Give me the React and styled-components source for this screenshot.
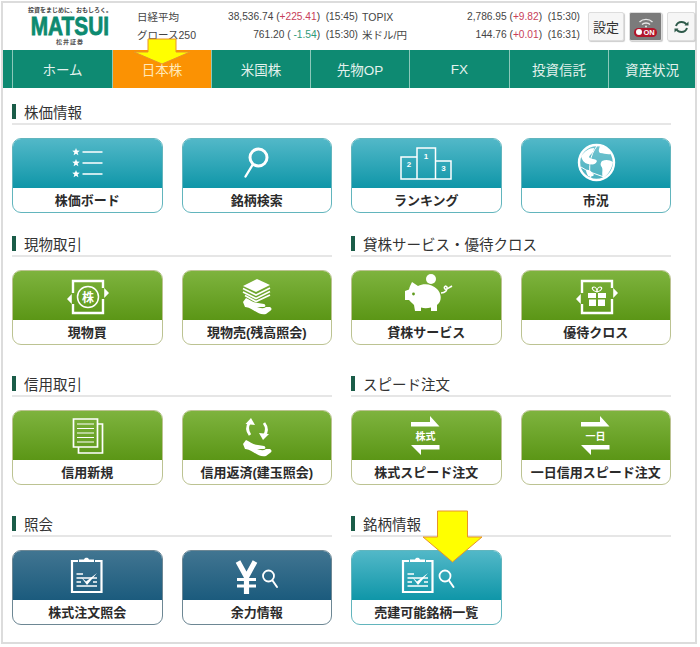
import React from 'react'
import styled, { createGlobalStyle } from 'styled-components'

const Global = createGlobalStyle`
  html, body { margin: 0; padding: 0; background: #fff; }
  body { font-family: "Liberation Sans", "Noto Sans CJK JP", sans-serif; color: #333; }
`

const tones = {
  teal: { top: '#52b8c8', bottom: '#0f96a8', edge: '#62b5bd' },
  green: { top: '#7eb33e', bottom: '#5b9616', edge: '#bcc392' },
  navy: { top: '#417591', bottom: '#1b5b7d', edge: '#6d8794' },
}

const Frame = styled.div`
  position: relative;
  box-sizing: border-box;
  width: 696px;
  height: 643px;
  margin: 1px 0 0 1px;
  border: 2px solid #dcdcdc;
  background: #fff;
`
const Header = styled.header`
  display: flex;
  align-items: flex-start;
  height: 47px;
`
const Logo = styled.div`
  width: 134px;
  flex: none;
  display: flex;
  flex-direction: column;
  align-items: center;
  padding-top: 4px;
`
const Tagline = styled.div`
  font-size: 6px;
  line-height: 7px;
  font-weight: 700;
  color: #444;
  white-space: nowrap;
`
const Wordmark = styled.div`
  font-size: 26px;
  line-height: 22px;
  font-weight: 700;
  color: #0d8a70;
  -webkit-text-stroke: 0.8px #0d8a70;
  transform: scaleX(0.8);
  margin-top: 1px;
`
const LogoSub = styled.div`
  font-size: 6px;
  line-height: 8px;
  font-weight: 700;
  color: #555;
  letter-spacing: 1px;
  margin-top: 1px;
`
const Ticker = styled.div`
  width: 443px;
  flex: none;
  display: grid;
  grid-template-columns: 66px 155px 4px 50px 168px;
  grid-auto-rows: 18px;
  margin-top: 5px;
  font-size: 10.2px;
  line-height: 18px;
  color: #444;
  white-space: nowrap;
`
const TickLabel = styled.span`
  font-size: 10.5px;
`
const TickValue = styled.span`
  text-align: right;
  grid-column: ${p => p.$col};
`
const Up = styled.span`
  color: #c8405a;
`
const Down = styled.span`
  color: #2f9a78;
`
const Tools = styled.div`
  display: flex;
  gap: 5px;
  margin: 9px 0 0 8px;
`
const ToolButton = styled.div`
  box-sizing: border-box;
  width: ${p => p.$w}px;
  height: 29px;
  display: flex;
  flex-direction: column;
  align-items: center;
  justify-content: center;
  border: 1px solid #ddd;
  border-radius: 2px;
  background: ${p => p.$dark ? '#7b7b7b' : '#f6f6f6'};
  font-size: 13px;
  color: #333;
  box-shadow: 1px 1px 1px #ccc;
`
const OnPill = styled.span`
  display: flex;
  align-items: center;
  gap: 1px;
  height: 9px;
  padding: 0 2px;
  border-radius: 5px;
  background: #b3142a;
  color: #fff;
  font-size: 7.5px;
  font-weight: 700;
  line-height: 9px;
`
const OnDot = styled.i`
  width: 6px;
  height: 6px;
  border-radius: 50%;
  background: #fff;
`
const Nav = styled.nav`
  display: grid;
  grid-template-columns: 9px 100px 99px 99px 99px 100px 99px 1fr;
  height: 38px;
  background: #0e8a72;
`
const NavItem = styled.div`
  box-sizing: border-box;
  display: flex;
  align-items: center;
  justify-content: center;
  border-left: 1px solid #8cc8ba;
  background: ${p => p.$active ? '#fb9203' : 'transparent'};
  color: ${p => p.$active ? '#ffe9b8' : '#e4f2ee'};
  font-size: 13.5px;
  &:first-child { border-left: 0; }
`
const Main = styled.main`
  display: grid;
  grid-template-columns: 320px 320px;
  column-gap: 19px;
  row-gap: 29px;
  padding: 14px 0 0 9px;
`
const Section = styled.section`
  grid-column: ${p => p.$wide ? '1 / span 2' : 'auto'};
  margin-bottom: ${p => p.$wide ? '-8px' : '0'};
`
const SectionTitle = styled.h2`
  box-sizing: border-box;
  display: flex;
  align-items: center;
  gap: 8px;
  height: 23px;
  margin: 0 0 13px;
  padding-bottom: 2px;
  border-bottom: 2px solid #e6e6e6;
  font-size: 14.5px;
  font-weight: 400;
  color: #333;
  &::before {
    content: '';
    width: 4px;
    height: 15px;
    background: #1a5c48;
  }
`
const Cards = styled.div`
  display: grid;
  grid-template-columns: repeat(${p => p.$cols}, 150.5px);
  column-gap: 19px;
`
const Card = styled.a`
  display: flex;
  flex-direction: column;
  height: 75px;
  box-sizing: border-box;
  border: 1px solid ${p => tones[p.$tone].edge};
  border-radius: 9px;
  overflow: hidden;
  background: #fff;
  text-decoration: none;
`
const CardTop = styled.div`
  flex: none;
  height: 49px;
  display: flex;
  justify-content: center;
  background: linear-gradient(${p => tones[p.$tone].top}, ${p => tones[p.$tone].bottom});
`
const CardLabel = styled.div`
  flex: 1;
  display: flex;
  align-items: center;
  justify-content: center;
  padding-bottom: 2px;
  font-size: 13px;
  font-weight: 700;
  color: #2b2b2b;
  white-space: nowrap;
`
const Arrow = styled.svg`
  position: absolute;
  left: ${p => p.$x}px;
  top: ${p => p.$y}px;
`

const Icon = ({ children }) => (
  <svg width="64" height="49" viewBox="0 0 64 49" fill="none" stroke="#fff" strokeWidth="1.5">{children}</svg>
)

const star = (x, y) => {
  const pts = []
  for (let i = 0; i < 10; i++) {
    const r = i % 2 ? 1.7 : 4
    const a = -Math.PI / 2 + i * Math.PI / 5
    pts.push(`${(x + r * Math.cos(a)).toFixed(1)},${(y + r * Math.sin(a)).toFixed(1)}`)
  }
  return <polygon key={y} points={pts.join(' ')} fill="#fff" stroke="none" />
}

const StarList = () => (
  <Icon>
    {star(21, 13)}{star(21, 24)}{star(21, 35)}
    <path d="M27.5 13H47.5M27.5 24H47.5M27.5 35H47.5" />
  </Icon>
)
const Search = () => (
  <Icon>
    <circle cx="33.5" cy="18.5" r="8.5" strokeWidth="3" />
    <path d="M27.5 26L20.5 37.5" strokeWidth="2.4" strokeLinecap="round" />
  </Icon>
)
const Podium = () => (
  <Icon>
    <path d="M23 18H7V40H57V22H41.5M23 40V9H41.5V40" />
    <text x="32" y="20" fill="#fff" stroke="none" fontSize="8" fontWeight="700" textAnchor="middle">1</text>
    <text x="15" y="28" fill="#fff" stroke="none" fontSize="8" fontWeight="700" textAnchor="middle">2</text>
    <text x="49.5" y="32" fill="#fff" stroke="none" fontSize="8" fontWeight="700" textAnchor="middle">3</text>
  </Icon>
)
const Globe = () => (
  <Icon>
    <circle cx="32.5" cy="23.5" r="17.5" fill="rgba(255,255,255,.22)" strokeWidth="2.4" />
    <path d="M17 17C21 12 25 9 30 9C30 14 26 15 25 18C27 21 31 19 33 22C31 27 27 25 24 25C20 24 18 21 17 17ZM36 7C41 8 45 11 47 15C43 16 40 14 36 14C34 12 35 10 36 7ZM38 22C42 20 46 21 49 23C48 30 44 36 39 39C37 34 40 30 37 27C36 25 37 23 38 22ZM22 31C25 30 28 33 30 36C28 38 26 38 24 37C23 35 22 33 22 31Z" fill="#fff" stroke="none" />
    <path d="M17 28C24 33 32 35 40 38M33 7C26 16 24 28 27 40" strokeWidth="1" />
  </Icon>
)
const Cycle = ({ children }) => (
  <Icon>
    <path d="M18 22V10H48V17M48 28V42H18V33" strokeWidth="2.4" />
    <path d="M49.2 17L54 22L49.2 27ZM16.8 23L12 28L16.8 33Z" fill="#fff" stroke="none" />
    {children}
  </Icon>
)
const BuyStock = () => (
  <Cycle>
    <circle cx="33" cy="26" r="10.5" />
    <text x="33" y="30.5" fill="#fff" stroke="none" fontSize="12" fontWeight="700" textAnchor="middle" fontFamily="Noto Sans CJK JP">株</text>
  </Cycle>
)
const Gift = () => (
  <Cycle>
    <path d="M24 22H32V27H24ZM34 22H42V27H34ZM25 28.5H32V35H25ZM34 28.5H41V35H34Z" fill="#fff" stroke="none" />
    <path d="M33 21C28 20 27 16 30 16C32 16 33 19 33 21C33 19 34 16 36 16C39 16 38 20 33 21Z" strokeWidth="1.2" />
  </Cycle>
)
const Hand = () => (
  <path d="M18 31L21 27C25 29 29 32 33 32L39 33C41 34 41 36 38 36H32C35 37 38 38 41 36L45 36C47 37 47 39 45 40L41 43C36 44 33 42 28 39C25 37 22 36 20 36Z" fill="#fff" stroke="none" />
)
const MoneyStack = () => (
  <Icon>
    <path d="M32 8L45 14L31 21L18 15Z" fill="#fff" stroke="none" />
    <path d="M18 17.5L31 24L45 17M18 21L31 27.5L45 20.5M20 24.5L31 30.5L45 24" strokeWidth="1.7" />
    <Hand />
  </Icon>
)
const Piggy = () => (
  <Icon>
    <circle cx="37" cy="8" r="5" fill="#fff" stroke="none" />
    <path d="M18 11L24 15C30 12 38 13 43 18C47 22 48 28 45 32L43 34V40H37V36.5C33 37.5 30 37.5 27 36.5V40H21L20 34C18 32 16 30 15 29H11V20L15 18.5C15.5 16 17 13 18 11Z" fill="#fff" stroke="none" />
    <circle cx="19.5" cy="23" r="1.4" fill="#5f9a1c" stroke="none" />
    <path d="M47 22C51 22 54 19 53 16C52 14 49 16 51 18C53 19 56 16 58 15" strokeWidth="1.6" />
  </Icon>
)
const Docs = () => (
  <Icon>
    <path d="M18.5 8H42.5V36H18.5ZM42.5 13H47.5V42H23.5V36" strokeWidth="1.7" />
    <path d="M22 13H39M22 17.5H39M22 22H39M22 26.5H39M22 31H39" strokeWidth="1.2" />
  </Icon>
)
const Settle = () => (
  <Icon>
    <path d="M25 24C22 20 22 15 25 11" strokeWidth="2.8" />
    <path d="M20.5 13L26 7L30 14Z" fill="#fff" stroke="none" />
    <path d="M39 12C42 16 42 21 39 25" strokeWidth="2.8" />
    <path d="M34 22L38 29L44 23Z" fill="#fff" stroke="none" />
    <g transform="translate(0 2)"><Hand /></g>
  </Icon>
)
const Swap = ({ text, size = 10 }) => (
  <Icon>
    <path d="M17 11H36V5L45.5 15.5H17Z" fill="#fff" stroke="none" />
    <text x="31.5" y="29" fill="#fff" stroke="none" fontSize={size} fontWeight="700" textAnchor="middle" fontFamily="Noto Sans CJK JP">{text}</text>
    <path d="M45.5 34H17L27 44V38.5H45.5Z" fill="#fff" stroke="none" />
  </Icon>
)
const ClipBody = ({ x = 16 }) => (
  <g transform={`translate(${x - 16} 0)`}>
    <path d="M23 10H17V41H46.5V10H40" strokeWidth="2.2" />
    <path d="M24 11V8.5H29C29.5 6 33.5 6 34 8.5H39V11Z" fill="#fff" stroke="none" />
    <path d="M21.5 27H42M21.5 35H42M21.5 31H26M38 31H42M21.5 23H28" strokeWidth="1.3" />
    <path d="M26 26L31 30.5L42 22L32 34Z" fill="#fff" stroke="none" />
  </g>
)
const OrderList = () => (
  <Icon><ClipBody /></Icon>
)
const Lens = ({ x }) => (
  <g>
    <circle cx={x} cy="25" r="5.5" strokeWidth="1.8" />
    <path d={`M${x + 4} 29.5L${x + 8.5} 36`} strokeWidth="2" strokeLinecap="round" />
  </g>
)
const YenSearch = () => (
  <Icon>
    <path d="M13 10.5L21.5 26L30 10.5M21.5 25V43" strokeWidth="5.2" />
    <path d="M12 28.5H31M12 35H31" strokeWidth="3" />
    <Lens x={43.5} />
  </Icon>
)
const ShortList = () => (
  <Icon>
    <ClipBody x={8} />
    <Lens x={51} />
  </Icon>
)

const sections = [
  { title: '株価情報', wide: true, tone: 'teal', items: [
    ['株価ボード', <StarList />], ['銘柄検索', <Search />], ['ランキング', <Podium />], ['市況', <Globe />],
  ] },
  { title: '現物取引', tone: 'green', items: [['現物買', <BuyStock />], ['現物売(残高照会)', <MoneyStack />]] },
  { title: '貸株サービス・優待クロス', tone: 'green', items: [['貸株サービス', <Piggy />], ['優待クロス', <Gift />]] },
  { title: '信用取引', tone: 'green', items: [['信用新規', <Docs />], ['信用返済(建玉照会)', <Settle />]] },
  { title: 'スピード注文', tone: 'green', items: [['株式スピード注文', <Swap text="株式" />], ['一日信用スピード注文', <Swap text="一日" />]] },
  { title: '照会', tone: 'navy', items: [['株式注文照会', <OrderList />], ['余力情報', <YenSearch />]] },
  { title: '銘柄情報', tone: 'teal', items: [['売建可能銘柄一覧', <ShortList />]] },
]

const tabs = ['ホーム', '日本株', '米国株', '先物OP', 'FX', '投資信託', '資産状況']

const YellowArrow = ({ x, y, w, h, shaft, neck }) => (
  <Arrow $x={x} $y={y} width={w} height={h} viewBox={`0 0 ${w} ${h}`}>
    <polygon
      points={`${(w - shaft) / 2},1 ${(w + shaft) / 2},1 ${(w + shaft) / 2},${neck} ${w - 1},${neck} ${w / 2},${h - 1} 1,${neck} ${(w - shaft) / 2},${neck}`}
      fill="#ffff00"
      stroke="#e8932a"
      strokeWidth="1"
    />
  </Arrow>
)

export default function App() {
  return (
    <>
      <Global />
      <Frame>
        <Header>
          <Logo>
            <Tagline>投資をまじめに、おもしろく。</Tagline>
            <Wordmark>MATSUI</Wordmark>
            <LogoSub>松井証券</LogoSub>
          </Logo>
          <Ticker>
            <TickLabel>日経平均</TickLabel>
            <TickValue $col="2">38,536.74 (<Up>+225.41</Up>)&nbsp; (15:45)</TickValue>
            <span />
            <TickLabel>TOPIX</TickLabel>
            <TickValue $col="5">2,786.95 (<Up>+9.82</Up>)&nbsp; (15:30)</TickValue>
            <TickLabel>グロース250</TickLabel>
            <TickValue $col="2">761.20 ( <Down>-1.54</Down>)&nbsp; (15:30)</TickValue>
            <span />
            <TickLabel>米ドル/円</TickLabel>
            <TickValue $col="5">144.76 (<Up>+0.01</Up>)&nbsp; (16:31)</TickValue>
          </Ticker>
          <Tools>
            <ToolButton $w={36}>設定</ToolButton>
            <ToolButton $w={33} $dark>
              <svg width="16" height="11" viewBox="0 0 16 11" fill="none" stroke="#e8e8e8" strokeWidth="1.4">
                <path d="M1.5 5C5 1.5 11 1.5 14.5 5M4 7.5C6 5.5 10 5.5 12 7.5" />
                <circle cx="8" cy="9.5" r="1" fill="#e8e8e8" stroke="none" />
              </svg>
              <OnPill><OnDot />ON</OnPill>
            </ToolButton>
            <ToolButton $w={28}>
              <svg width="15" height="14" viewBox="0 0 15 14" fill="none" stroke="#2e5a4a" strokeWidth="2">
                <path d="M2 6C3 3 5 2 7.5 2C10 2 11.5 3 12.5 4.5M13 8C12 11 10 12 7.5 12C5 12 3.5 11 2.5 9.5" />
                <path d="M10.5 5.5H14.5V1.5ZM4.5 8.5H0.5V12.5Z" fill="#2e5a4a" stroke="none" />
              </svg>
            </ToolButton>
          </Tools>
        </Header>
        <Nav>
          <NavItem />
          {tabs.map((t, i) => <NavItem key={t} $active={i === 1}>{t}</NavItem>)}
        </Nav>
        <Main>
          {sections.map(s => (
            <Section key={s.title} $wide={s.wide}>
              <SectionTitle>{s.title}</SectionTitle>
              <Cards $cols={s.wide ? 4 : 2}>
                {s.items.map(([label, icon]) => (
                  <Card key={label} $tone={s.tone}>
                    <CardTop $tone={s.tone}>{icon}</CardTop>
                    <CardLabel>{label}</CardLabel>
                  </Card>
                ))}
              </Cards>
            </Section>
          ))}
        </Main>
        <YellowArrow x={130} y={35} w={58} h={27} shaft={28} neck={14} />
        <YellowArrow x={419} y={507} w={61} h={53} shaft={30} neck={27} />
      </Frame>
    </>
  )
}
